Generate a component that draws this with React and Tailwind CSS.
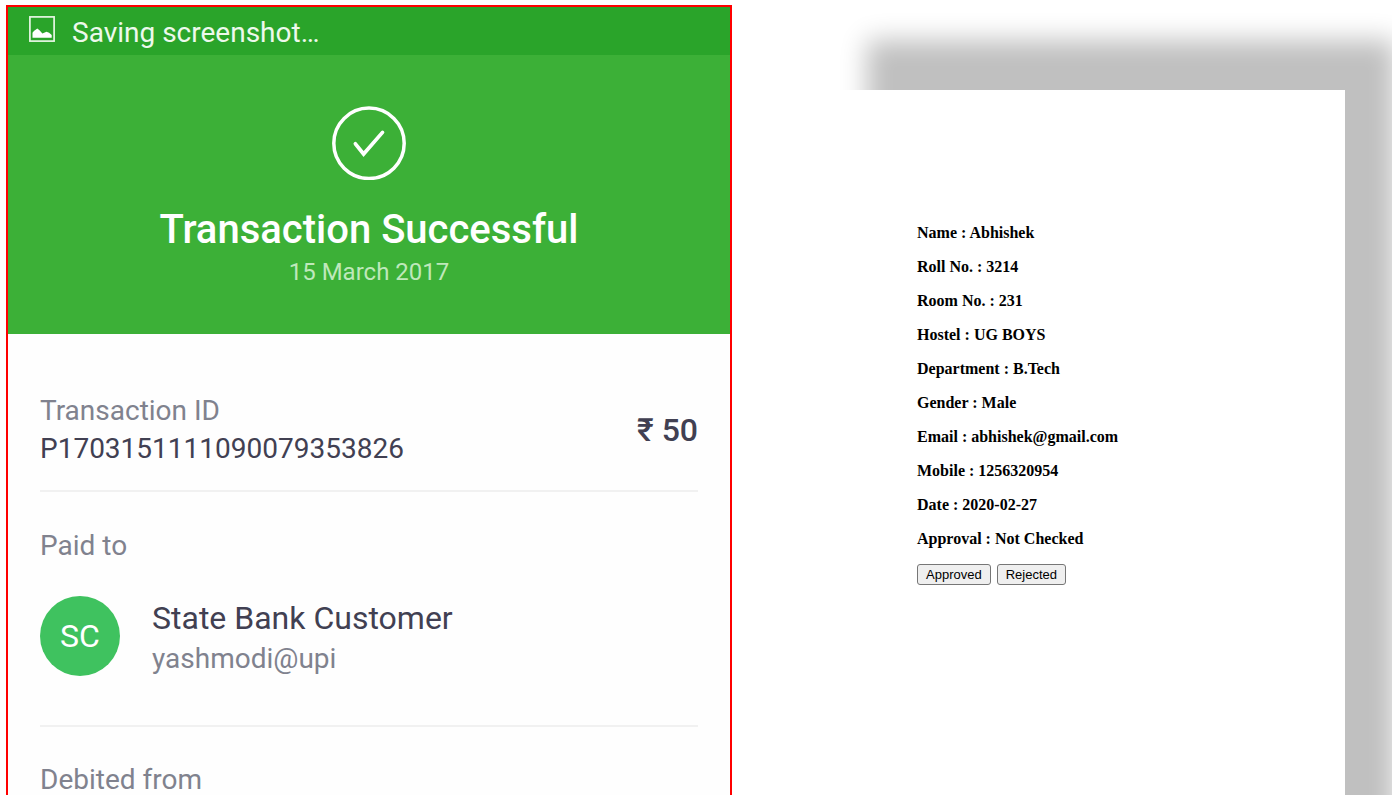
const details = [
  ["Name", "Abhishek"],
  ["Roll No.", "3214"],
  ["Room No.", "231"],
  ["Hostel", "UG BOYS"],
  ["Department", "B.Tech"],
  ["Gender", "Male"],
  ["Email", "abhishek@gmail.com"],
  ["Mobile", "1256320954"],
  ["Date", "2020-02-27"],
  ["Approval", "Not Checked"],
];

function PictureIcon() {
  return (
    <svg className="size-7 shrink-0" viewBox="0 0 28 28" fill="none" aria-hidden="true">
      <rect x="1.9" y="1.9" width="24.2" height="24.2" stroke="#e6f6e4" strokeWidth="1.7" />
      <path d="M4.5 22.7v-5l1.4-1.8 3.4-2.3 2.2 1.6 2.9 3.2 4.1-1.7 2.6 1 2.6 2.4v2.6z" fill="#fff" />
    </svg>
  );
}

function CheckCircle() {
  return (
    <svg className="size-[74px]" viewBox="0 0 74 74" fill="none" stroke="#fff" aria-hidden="true">
      <circle cx="37" cy="37.3" r="35.2" strokeWidth="3.5" />
      <path d="M23.4 37.8L31.6 48L50.5 26.4" strokeWidth="3.7" strokeLinecap="round" strokeLinejoin="miter" />
    </svg>
  );
}

function Receipt() {
  return (
    <section className="min-w-0 border-2 border-b-0 border-[#ff0000] bg-[#fefefe] font-['Roboto',sans-serif] text-[28px] leading-[38px] text-[#80828e]">
      <div className="flex h-12 items-start gap-4 bg-[#2aa42a] pt-2 pl-5 text-[#edf9ec]">
        <PictureIcon />
        <span className="leading-9">Saving screenshot…</span>
      </div>
      <header className="flex flex-col items-center bg-[#3cb037] pt-[51px] pb-[45px] text-white">
        <CheckCircle />
        <h1 className="mt-[25px] text-[40px] leading-[50px] font-medium">Transaction Successful</h1>
        <p className="text-2xl leading-[34px] text-[#bfe8bb]">15 March 2017</p>
      </header>
      <div className="px-8">
        <div className="flex items-center justify-between border-b-2 border-[#f1f1f1] pt-[58px] pb-[22px]">
          <div>
            <p>Transaction ID</p>
            <p className="text-[#414052]">P1703151111090079353826</p>
          </div>
          <p className="text-[32px] font-medium text-[#414052]">₹ 50</p>
        </div>
        <div className="border-b-2 border-[#f1f1f1] pt-[35px] pb-[47px]">
          <h2>Paid to</h2>
          <div className="mt-[29px] flex items-center gap-8">
            <div className="flex size-20 items-center justify-center rounded-full bg-[#3fc25f] text-[32px] text-white">SC</div>
            <div className="pt-0.5">
              <p className="text-[32px] leading-[44px] text-[#414052]">State Bank Customer</p>
              <p>yashmodi@upi</p>
            </div>
          </div>
        </div>
        <h2 className="pt-[39px] leading-7">Debited from</h2>
      </div>
    </section>
  );
}

function ActionButton({ children }) {
  return (
    <button
      type="button"
      className="rounded-[3px] border border-[#767676] bg-[#efefef] px-2 py-px font-['Liberation_Sans',sans-serif] text-[13px] leading-[17px]"
    >
      {children}
    </button>
  );
}

function StudentCard() {
  return (
    <section className="mt-[85px] min-w-0 bg-white px-[100px] pt-[134px] pb-[290px] font-['Liberation_Serif',serif] text-base leading-[18px] font-bold text-black shadow-[50px_-50px_25px_#c0c0c0]">
      <div className="flex flex-col gap-4">
        {details.map(([label, value]) => (
          <p key={label}>
            {label} : {value}
          </p>
        ))}
      </div>
      <div className="mt-4 flex gap-1.5 font-normal">
        <ActionButton>Approved</ActionButton>
        <ActionButton>Rejected</ActionButton>
      </div>
    </section>
  );
}

export default function App() {
  return (
    <main className="grid h-screen grid-cols-[726fr_528fr] gap-[85px] overflow-hidden bg-white pt-[5px] pr-[47px] pl-1.5">
      <Receipt />
      <StudentCard />
    </main>
  );
}
